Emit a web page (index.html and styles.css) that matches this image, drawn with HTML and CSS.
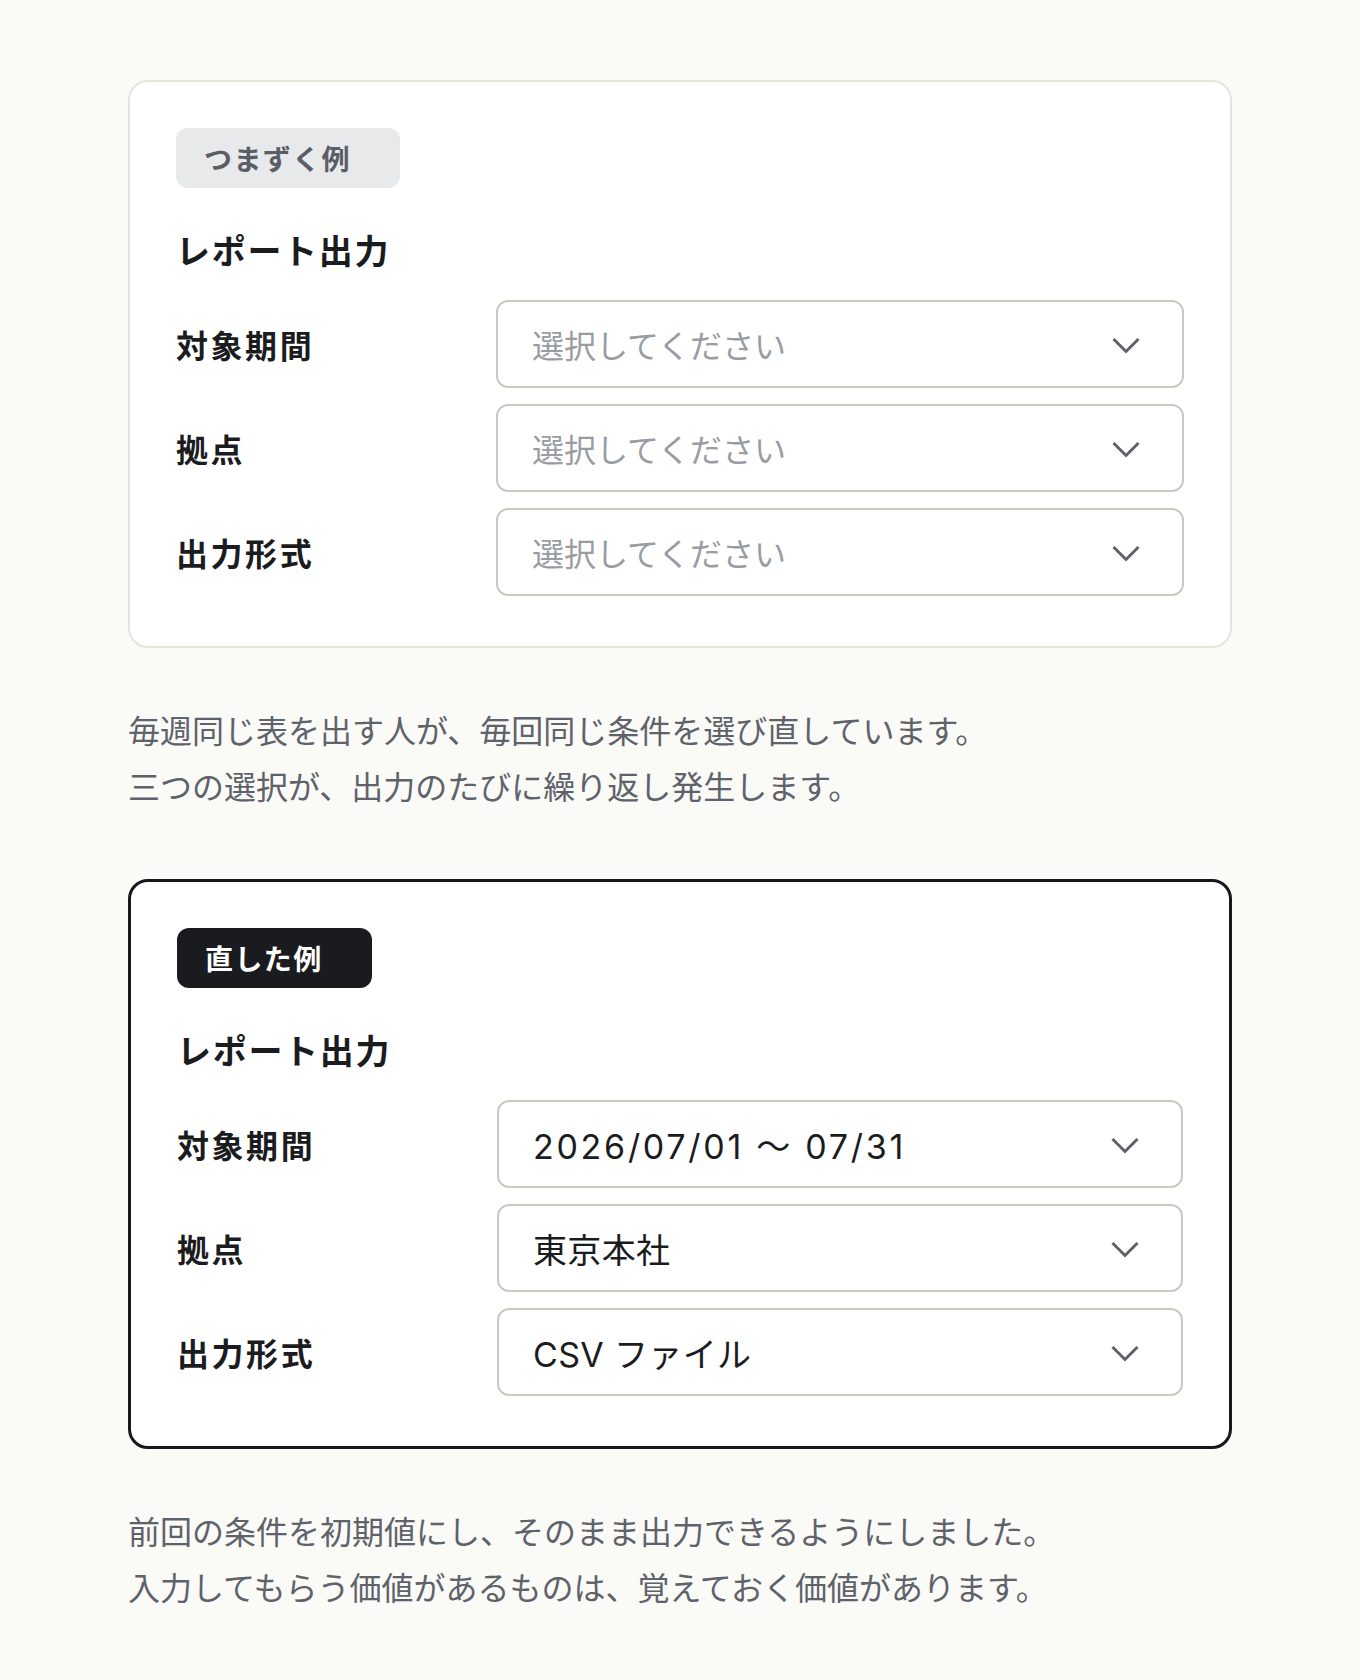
FILE: index.html
```html
<!DOCTYPE html>
<html lang="ja">
<head>
    <meta charset="UTF-8">
    <meta name="viewport" content="width=device-width, initial-scale=1.0">
    <title>レポート出力の例</title>
    <link rel="stylesheet" href="styles.css">
</head>
<body>
    <main class="page">
        <!-- Before -->
        <section class="example example-bad">
            <span class="badge badge-muted">つまずく例</span>
            <h2 class="form-title">レポート出力</h2>
            <div class="form-grid">
                <div class="field-label">対象期間</div>
                <div class="select is-empty">
                    <span>選択してください</span>
                    <svg class="chevron" viewBox="0 0 28 16"><polyline points="1.5,3 14,15.5 26.5,3"/></svg>
                </div>
                <div class="field-label">拠点</div>
                <div class="select is-empty">
                    <span>選択してください</span>
                    <svg class="chevron" viewBox="0 0 28 16"><polyline points="1.5,3 14,15.5 26.5,3"/></svg>
                </div>
                <div class="field-label">出力形式</div>
                <div class="select is-empty">
                    <span>選択してください</span>
                    <svg class="chevron" viewBox="0 0 28 16"><polyline points="1.5,3 14,15.5 26.5,3"/></svg>
                </div>
            </div>
        </section>

        <p class="note">毎週同じ表を出す人が、毎回同じ条件を選び直しています。<br>三つの選択が、出力のたびに繰り返し発生します。</p>

        <!-- After -->
        <section class="example example-good">
            <span class="badge badge-dark">直した例</span>
            <h2 class="form-title">レポート出力</h2>
            <div class="form-grid">
                <div class="field-label">対象期間</div>
                <div class="select">
                    <span class="value-date">2026/07/01 ～ 07/31</span>
                    <svg class="chevron" viewBox="0 0 28 16"><polyline points="1.5,3 14,15.5 26.5,3"/></svg>
                </div>
                <div class="field-label">拠点</div>
                <div class="select">
                    <span>東京本社</span>
                    <svg class="chevron" viewBox="0 0 28 16"><polyline points="1.5,3 14,15.5 26.5,3"/></svg>
                </div>
                <div class="field-label">出力形式</div>
                <div class="select">
                    <span>CSV ファイル</span>
                    <svg class="chevron" viewBox="0 0 28 16"><polyline points="1.5,3 14,15.5 26.5,3"/></svg>
                </div>
            </div>
        </section>

        <p class="note">前回の条件を初期値にし、そのまま出力できるようにしました。<br>入力してもらう価値があるものは、覚えておく価値があります。</p>
    </main>
</body>
</html>
```

FILE: styles.css
```css
body {
    margin: 0;
    padding: 0;
    background: #fafaf6;
    color: #1b1c20;
    font-family: "Noto Sans CJK JP", "Noto Sans", sans-serif;
}

.page {
    width: 1104px;
    margin: 0 auto;
    padding: 80px 0 40px;
    box-sizing: border-box;
}

/* Example cards */
.example {
    background: #fff;
    border-radius: 20px;
    padding: 46px 46px 50px;
}

.example-bad {
    border: 2px solid #e4e4dc;
}

.example-good {
    border: 3px solid #17181c;
}

.badge {
    display: inline-flex;
    align-items: center;
    height: 60px;
    padding: 0 49px 0 28px;
    border-radius: 12px;
    font-size: 28px;
    font-weight: 700;
    letter-spacing: 0.05em;
    line-height: 1;
}

.badge-muted {
    background: #e8e9eb;
    color: #5b5e66;
}

.badge-dark {
    background: #1a1b1f;
    color: #fff;
}

.form-title {
    margin: 38px 0 26px;
    font-size: 34px;
    line-height: 48px;
    font-weight: 700;
    letter-spacing: 0.05em;
}

/* Form rows */
.form-grid {
    display: grid;
    grid-template-columns: 296px 1fr;
    column-gap: 24px;
    row-gap: 16px;
    align-items: center;
}

.field-label {
    font-size: 32px;
    font-weight: 700;
    line-height: 1.4;
    letter-spacing: 0.08em;
}

.select {
    display: flex;
    align-items: center;
    justify-content: space-between;
    height: 88px;
    padding: 0 42px 0 34px;
    border: 2px solid #c9c9bd;
    border-radius: 12px;
    box-sizing: border-box;
    font-family: Inter, "Noto Sans CJK JP", sans-serif;
    font-size: 34px;
    letter-spacing: 0.01em;
    color: #1b1c20;
}

.select .value-date {
    letter-spacing: 0.08em;
}

.select.is-empty {
    font-size: 32px;
    letter-spacing: 0;
    color: #9a9ca3;
}

.chevron {
    width: 28px;
    height: 16px;
    fill: none;
    stroke: #5f6068;
    stroke-width: 3;
    overflow: visible;
}

/* Notes under each card */
.note {
    margin: 53px 0 66px;
    font-size: 32px;
    line-height: 56px;
    color: #5f626a;
}
```
